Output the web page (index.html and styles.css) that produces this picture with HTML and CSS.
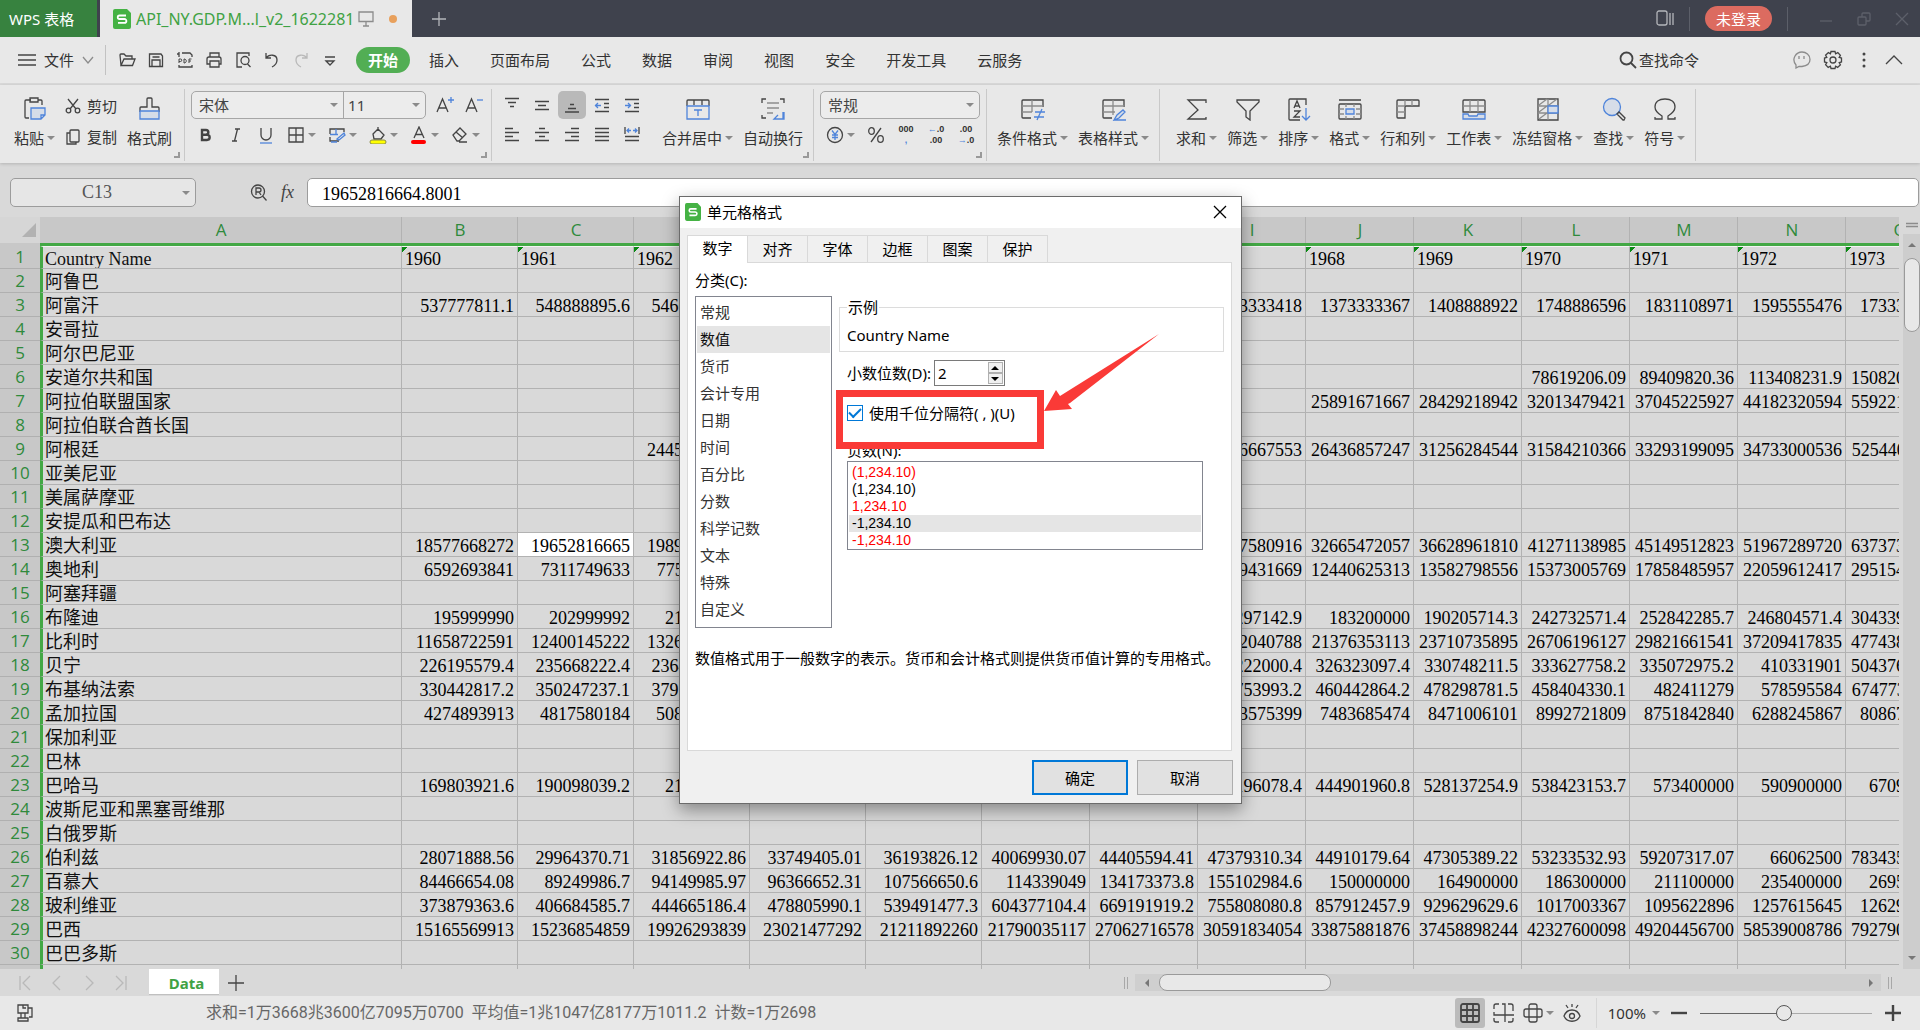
FILE: index.html
```html
<!DOCTYPE html>
<html lang="zh-CN">
<head>
<meta charset="utf-8">
<title>WPS 表格</title>
<link rel="stylesheet" href="styles.css">
</head>
<body>
<header class="titlebar">
  <button class="home">WPS 表格</button>
  <div class="doc">
    <svg class="slogo" width="18" height="20" viewBox="0 0 18 20"><path d="M2 0h12l4 4v14a2 2 0 0 1-2 2H2a2 2 0 0 1-2-2V2a2 2 0 0 1 2-2z"/><path class="s" d="M13 6.500H6.500a1.700 1.700 0 0 0 0 3.500h5a1.900 1.900 0 0 1 0 3.800H5"/></svg>
    <span class="doc-name">API_NY.GDP.M...l_v2_1622281</span>
    <svg class="i grey" width="16" height="16" viewBox="0 0 16 16"><path d="M1 1h14v9.500H1zM8 11v4M5 15h6"/></svg>
    <span class="dot"></span>
  </div>
  <button class="add" aria-label="新建"><svg class="i pale" width="16" height="16" viewBox="0 0 16 16"><path d="M8 1v14M1 8h14"/></svg></button>
  <div class="title-right">
    <svg class="i pale" width="18" height="17" viewBox="0 0 18 17"><rect x="1" y="1" width="10" height="14" rx="2"/><path d="M14 3v12M17 3v12"/></svg>
    <span class="tsep"></span>
    <button class="login">未登录</button>
    <span class="tsep"></span>
    <div class="winbtns">
      <svg class="i dim" width="14" height="14" viewBox="0 0 14 14"><path d="M1 9h12"/></svg>
      <svg class="i dim" width="14" height="14" viewBox="0 0 14 14"><rect x="1" y="5" width="8" height="8" rx="1"/><path d="M5 5V2a1 1 0 0 1 1-1h6a1 1 0 0 1 1 1v6a1 1 0 0 1-1 1H9"/></svg>
      <svg class="i dim" width="14" height="14" viewBox="0 0 14 14"><path d="M1 1l12 12M13 1L1 13"/></svg>
    </div>
  </div>
</header>

<nav class="menu">
  <button class="file"><svg class="i" width="18" height="14" viewBox="0 0 18 14"><path d="M0 2h18M0 7h18M0 12h18"/></svg>文件<svg class="i grey" width="12" height="8" viewBox="0 0 12 8"><path d="M1 1l5 6 5-6"/></svg></button>
  <div class="quick">
    <svg class="i" width="18" height="18" viewBox="0 0 18 18"><path d="M3 14.500L2 4a1 1 0 0 1 1-1h3l2 2h6v3M3 14.500L6 8h11l-2.500 6.500z"/></svg>
    <svg class="i" width="18" height="18" viewBox="0 0 18 18"><path d="M3 3h11l1.500 2v10.500h-13V3zM5 15V9h8v6M5.500 6h7"/></svg>
    <svg class="i" width="18" height="18" viewBox="0 0 18 18"><path d="M3 6V1M1 3h2M6 2h8l2 2v2M3 14v2h13v-2"/><path class="thin" d="M3 12V8h1.500a1 1 0 0 1 0 2.500H3M8 8v4c3 0 3-4 0-4M13 12V8h2.500M13 10h2"/></svg>
    <svg class="i" width="18" height="18" viewBox="0 0 18 18"><path d="M5 6V2h9v4M5 13H2V8a2 2 0 0 1 2-2h10a2 2 0 0 1 2 2v5h-2M5 10h9v6H5z"/></svg>
    <svg class="i" width="18" height="18" viewBox="0 0 18 18"><path d="M8 16H3V2h12v3M13.500 13l3 3"/><circle cx="11" cy="9.500" r="4"/></svg>
    <svg class="i" width="18" height="18" viewBox="0 0 18 18"><path d="M3 2v5h5M3 7c3-4 11-4 11 2 0 4-3 6-5 7"/></svg>
    <svg class="i fade" width="18" height="18" viewBox="0 0 18 18"><path d="M15 2v5h-5M15 7C12 3 4 3 4 9c0 4 3 6 5 7"/></svg>
    <svg class="i" width="18" height="18" viewBox="0 0 18 18"><path d="M4 6h10M5 10l4 4 4-4z"/></svg>
  </div>
  <div class="tabs">
    <button class="on">开始</button><button>插入</button><button>页面布局</button><button>公式</button><button>数据</button><button>审阅</button><button>视图</button><button>安全</button><button>开发工具</button><button>云服务</button>
  </div>
  <button class="search"><svg class="i bold" width="18" height="18" viewBox="0 0 18 18"><circle cx="7.500" cy="7.500" r="6"/><path d="M12 12l5 5"/></svg>查找命令</button>
  <div class="menu-right">
    <svg class="i grey" width="18" height="18" viewBox="0 0 18 18"><path d="M3 14C-2 8 3 1 9 1c4 0 8 3 8 7.500S13 15 9 15.500H6L3 17z"/><path d="M6 5v3M11 5v3"/></svg>
    <svg class="i" width="20" height="20" viewBox="0 0 20 20"><circle cx="10" cy="10" r="3"/><path d="M8 1.500h4l.6 2.300 2.200-1.200 2.600 2.800-1.200 2 2.300.6v4l-2.300.6 1.200 2.200-2.800 2.600-2-1.200-.6 2.300H8l-.6-2.300-2.200 1.200-2.600-2.800 1.200-2L1.500 12V8l2.300-.6-1.200-2.200 2.800-2.600 2 1.200z"/></svg>
    <svg class="solid" width="4" height="18" viewBox="0 0 4 18"><circle cx="2" cy="3" r="1.500"/><circle cx="2" cy="9" r="1.500"/><circle cx="2" cy="15" r="1.500"/></svg>
    <svg class="i" width="18" height="12" viewBox="0 0 18 12"><path d="M1 10l8-8 8 8"/></svg>
  </div>
</nav>

<section class="ribbon">
  <div class="group clip">
    <button class="big"><svg class="i" width="24" height="24" viewBox="0 0 24 24"><path d="M8 3H3a1 1 0 0 0-1 1v16a1 1 0 0 0 1 1h3M15 3h3a1 1 0 0 1 1 1v4M7 1h8v4H7z"/><path class="b fl" d="M8 11h14v7l-4 4H8zM22 18h-4v4"/></svg><span>粘贴<i class="arr"></i></span></button>
    <div class="col">
      <button class="small"><svg class="i" width="16" height="16" viewBox="0 0 16 16"><path d="M3 1l8 10M13 1L5 11"/><circle cx="3.500" cy="12.500" r="2.300"/><circle cx="12.500" cy="12.500" r="2.300"/></svg>剪切</button>
      <button class="small"><svg class="i" width="16" height="16" viewBox="0 0 16 16"><rect x="5" y="1" width="9" height="12" rx="1"/><path d="M5 4H2v11h9v-2"/></svg>复制</button>
    </div>
    <button class="big"><svg class="i" width="24" height="24" viewBox="0 0 24 24"><path d="M2 15v-4a1 1 0 0 1 1-1h6V2a1 1 0 0 1 1-1h3a1 1 0 0 1 1 1v8h6a1 1 0 0 1 1 1v4"/><path class="b fl" d="M2 14h19v8H2z"/></svg><span>格式刷</span></button>
    <i class="corner"></i>
  </div>
  <div class="group font">
    <div class="col">
      <div class="line">
        <div class="combos">
          <span class="sel name"><select aria-label="字体"><option>宋体</option></select></span>
          <span class="sel size"><select aria-label="字号"><option>11</option></select></span>
        </div>
        <svg class="i" width="19" height="18" viewBox="0 0 19 18"><path d="M1 16L6.500 3 12 16M3 12h7"/><path class="b" d="M15 1v6M12 4h6"/></svg>
        <svg class="i" width="19" height="18" viewBox="0 0 19 18"><path d="M1 16L6.500 3 12 16M3 12h7"/><path class="b" d="M12 4h6"/></svg>
      </div>
      <div class="line tools">
        <svg class="i heavy" width="18" height="18" viewBox="0 0 18 18"><path d="M5 4h4a2.300 2.300 0 0 1 0 4.700H5zM5 8.700h5a2.600 2.600 0 0 1 0 5.300H5z"/></svg>
        <svg class="i" width="18" height="18" viewBox="0 0 18 18"><path d="M8 3h5M5 15h5M10.500 3l-3 12"/></svg>
        <svg class="i" width="18" height="18" viewBox="0 0 18 18"><path d="M4 2v7a5 5 0 0 0 10 0V2"/><path class="b" d="M3 17h12"/></svg>
        <span class="drop"><svg class="i" width="18" height="18" viewBox="0 0 18 18"><path d="M2 2h14v14H2zM9 2v14M2 9h14"/></svg><i class="arr"></i></span>
        <span class="drop"><svg class="i" width="18" height="18" viewBox="0 0 18 18"><path d="M2 8V3h14v3M2 11v4h9"/><path class="b" d="M2 8.500h8M8 3v5M9 13l7-6 1 2-6 5zM3 16h6"/></svg><i class="arr"></i></span>
        <span class="drop"><svg class="i" width="18" height="18" viewBox="0 0 18 18"><path d="M9 1v4M4 8l5-5 6 6-3 4H5z"/><rect class="yel" x="1" y="14" width="16" height="4" rx="2"/></svg><i class="arr"></i></span>
        <span class="drop"><svg class="i" width="18" height="18" viewBox="0 0 18 18"><path d="M4 12L9 1l5 11M6 8.500h6"/><rect class="red" x="1" y="14" width="15" height="4" rx="2"/></svg><i class="arr"></i></span>
        <span class="drop"><svg class="i" width="18" height="18" viewBox="0 0 18 18"><path d="M2 9l7-7 6 6-7 7H6zM5 6l7 6M8 16h8"/></svg><i class="arr"></i></span>
      </div>
    </div>
    <i class="corner"></i>
  </div>
  <div class="group align">
    <div class="icons">
      <button aria-label="顶端对齐"><svg class="i" width="16" height="16" viewBox="0 0 16 16"><path d="M1 1.500h14M4 5.500h8M6 9.500h4"/></svg></button>
      <button aria-label="垂直居中"><svg class="i" width="16" height="16" viewBox="0 0 16 16"><path d="M1 4.500h14M4 8.500h8M1 12.500h14"/></svg></button>
      <button class="on" aria-label="底端对齐"><svg class="i" width="16" height="16" viewBox="0 0 16 16"><path d="M6 7.500h4M4 11.500h8M1 15h14"/></svg></button>
      <button aria-label="减少缩进"><svg class="i" width="16" height="16" viewBox="0 0 16 16"><path d="M1 2.500h14M10 6.500h5M10 10.500h5M1 14.500h14"/><path class="b" d="M7 8.500H1M4 6L1.500 8.500 4 11"/></svg></button>
      <button aria-label="增加缩进"><svg class="i" width="16" height="16" viewBox="0 0 16 16"><path d="M1 2.500h14M10 6.500h5M10 10.500h5M1 14.500h14"/><path class="b" d="M1 8.500h6M4 6l2.500 2.500L4 11"/></svg></button>
      <button aria-label="左对齐"><svg class="i" width="16" height="16" viewBox="0 0 16 16"><path d="M1 1.500h8M1 5.500h14M1 9.500h8M1 13.500h14"/></svg></button>
      <button aria-label="水平居中"><svg class="i" width="16" height="16" viewBox="0 0 16 16"><path d="M5 1.500h6M1 5.500h14M5 9.500h6M1 13.500h14"/></svg></button>
      <button aria-label="右对齐"><svg class="i" width="16" height="16" viewBox="0 0 16 16"><path d="M7 1.500h8M1 5.500h14M7 9.500h8M1 13.500h14"/></svg></button>
      <button aria-label="两端对齐"><svg class="i" width="16" height="16" viewBox="0 0 16 16"><path d="M1 1.500h14M1 5.500h14M1 9.500h14M1 13.500h14"/></svg></button>
      <button aria-label="分散对齐"><svg class="i" width="16" height="16" viewBox="0 0 16 16"><path d="M1 0v7M15 0v7M1 9.500h14M1 13.500h14"/><path class="b" d="M3 3.500h4M9 3.500h4M5 1.500l-2 2 2 2M11 1.500l2 2-2 2"/></svg></button>
    </div>
    <button class="big"><svg class="i" width="24" height="24" viewBox="0 0 24 24"><path d="M1 9V4a1 1 0 0 1 1-1h20a1 1 0 0 1 1 1v5M8 3v5M16 3v5"/><path class="b" d="M1 9h22v13H1zM8 13h8M12 13v6"/></svg><span>合并居中<i class="arr"></i></span></button>
    <button class="big"><svg class="i" width="24" height="24" viewBox="0 0 24 24"><path d="M1 6V2h4M19 2h4v4M1 18v3h4"/><path class="g" d="M6 6h12M6 11h12M6 16h6"/><path class="b" d="M23 15v7h-9M17 18l-4 4h9v-7"/></svg><span>自动换行</span></button>
    <i class="corner"></i>
  </div>
  <div class="group font">
    <div class="col">
      <div class="line"><div class="combos"><span class="sel fmt"><select aria-label="数字格式"><option>常规</option></select></span></div></div>
      <div class="line tools">
        <span class="drop"><svg class="i" width="18" height="18" viewBox="0 0 18 18"><circle cx="9" cy="9" r="7.500"/><path class="b" d="M6 4.500l3 4 3-4M9 8.500V14M6 9h6M6 11.500h6"/></svg><i class="arr"></i></span>
        <svg class="i" width="18" height="18" viewBox="0 0 18 18"><ellipse cx="4.500" cy="5" rx="2.800" ry="3.400"/><ellipse cx="13.500" cy="13" rx="2.800" ry="3.400"/><path d="M14 2L4 16"/></svg>
        <span class="digits"><b>000</b><b class="bl">,</b></span>
        <span class="digits"><b><em>←</em>.0</b><b>.00</b></span>
        <span class="digits"><b>.00</b><b><em>→</em>.0</b></span>
      </div>
    </div>
    <i class="corner"></i>
  </div>
  <div class="group">
    <button class="big"><svg class="i" width="24" height="24" viewBox="0 0 24 24"><path d="M10 21H2a1 1 0 0 1-1-1V4a1 1 0 0 1 1-1h20v7"/><path class="g" d="M1 9h21M1 15h10M11 3v12"/><path class="b" d="M14 15h10M13 20h10M21 12l-5 11"/></svg><span>条件格式<i class="arr"></i></span></button>
    <button class="big"><svg class="i" width="24" height="24" viewBox="0 0 24 24"><path d="M10 21H2a1 1 0 0 1-1-1V4a1 1 0 0 1 1-1h20v7"/><path class="g" d="M1 9h21M1 15h12M11 3v15"/><path class="b fl" d="M12 23l3-5 6-5 2 2-6 6zM12 23h12"/></svg><span>表格样式<i class="arr"></i></span></button>
  </div>
  <div class="group last">
    <button class="big"><svg class="i" width="24" height="24" viewBox="0 0 24 24"><path d="M21 6V3H3l10 10L3 22h18v-2"/></svg><span>求和<i class="arr"></i></span></button>
    <button class="big"><svg class="i" width="24" height="24" viewBox="0 0 24 24"><path d="M1 3h22v2l-9 9v9l-4-3v-6L1 5z"/></svg><span>筛选<i class="arr"></i></span></button>
    <button class="big"><svg class="i" width="24" height="24" viewBox="0 0 24 24"><path d="M13 23H3a1 1 0 0 1-1-1V3a1 1 0 0 1 1-1h16v6M7 11l3-7 3 7M8 9h4M7 14h6l-6 6h6"/><path class="b" d="M19 11v12M15 19l4 4 4-4"/></svg><span>排序<i class="arr"></i></span></button>
    <button class="big"><svg class="i" width="24" height="24" viewBox="0 0 24 24"><path d="M1 3h22M2 7h20a1 1 0 0 1 1 1v13a1 1 0 0 1-1 1H2a1 1 0 0 1-1-1V8a1 1 0 0 1 1-1z"/><path class="g" d="M1 12h5M18 12h5M1 17h5M18 17h5M8 7v3M16 7v3M8 19v3M16 19v3"/><path class="b fl" d="M8 12h8v5H8z"/></svg><span>格式<i class="arr"></i></span></button>
    <button class="big"><svg class="i" width="24" height="24" viewBox="0 0 24 24"><path d="M2 3h20a1 1 0 0 1 1 1v5H9v12H2a1 1 0 0 1-1-1V4a1 1 0 0 1 1-1z"/><path class="g" d="M9 9H1M1 15h8M9 3v6M16 3v6"/></svg><span>行和列<i class="arr"></i></span></button>
    <button class="big"><svg class="i" width="24" height="24" viewBox="0 0 24 24"><path d="M2 3h20a1 1 0 0 1 1 1v11H1V4a1 1 0 0 1 1-1z"/><path class="g" d="M1 9h22M8 3v12M16 3v12"/><path class="b fl" d="M1 17h5l1 2h8l1-2h7v5H1z"/></svg><span>工作表<i class="arr"></i></span></button>
    <button class="big"><svg class="i" width="24" height="24" viewBox="0 0 24 24"><path d="M2 2h20v21H2z"/><path class="g" d="M12 2v21M2 9h20M2 16h20M3 8l8-6M13 8l8-6M3 15l8-6M3 22l8-6"/><path class="b fl" d="M12 9h10v7H12z"/></svg><span>冻结窗格<i class="arr"></i></span></button>
    <button class="big"><svg class="i" width="24" height="24" viewBox="0 0 24 24"><circle class="b fl" cx="10" cy="10" r="8.500"/><path d="M15 17l2-2 6 6-1 2h-1z"/></svg><span>查找<i class="arr"></i></span></button>
    <button class="big"><svg class="i" width="24" height="24" viewBox="0 0 24 24"><path d="M2 20v2h7v-3C4 16 2 13 2 10c0-5 4-8 10-8s10 3 10 8c0 3-2 6-7 9v3h7v-2"/></svg><span>符号<i class="arr"></i></span></button>
  </div>
</section>

<section class="formula">
  <span class="sel cellname"><input value="C13" aria-label="名称框"></span>
  <div class="fx">
    <svg class="i" width="18" height="18" viewBox="0 0 18 18"><circle cx="8" cy="7.500" r="6.500"/><path d="M12.500 12l4 4.500M6 11V4h3a2 2 0 0 1 0 4H6M9 8l2 3"/></svg>
    <span class="fxs">fx</span>
  </div>
  <input class="expr" value="19652816664.8001" aria-label="编辑栏">
</section>

<main class="work">
  <div class="grid">
    <table>
      <colgroup><col class="ch"><col class="ca"><col class="cb" span="5"><col class="cg" span="9"></colgroup>
      <thead><tr><th><svg class="tri" width="14" height="14" viewBox="0 0 14 14"><path d="M14 0v14H0z"/></svg><th>A<th>B<th>C<th>D<th>E<th>F<th>G<th>H<th>I<th>J<th>K<th>L<th>M<th>N<th>O</tr></thead>
      <tbody>
      <tr class="first"><th>1<td>Country Name<td>1960<td>1961<td>1962<td><td><td><td><td><td>1968<td>1969<td>1970<td>1971<td>1972<td>1973
      <tr><th>2<td>阿鲁巴<td><td><td><td><td><td><td><td><td><td><td><td><td><td>
      <tr><th>3<td>阿富汗<td>537777811.1<td>548888895.6<td>546666677.8<td><td><td><td><td>1673333418<td>1373333367<td>1408888922<td>1748886596<td>1831108971<td>1595555476<td>1733333264
      <tr><th>4<td>安哥拉<td><td><td><td><td><td><td><td><td><td><td><td><td><td>
      <tr><th>5<td>阿尔巴尼亚<td><td><td><td><td><td><td><td><td><td><td><td><td><td>
      <tr><th>6<td>安道尔共和国<td><td><td><td><td><td><td><td><td><td><td>78619206.09<td>89409820.36<td>113408231.9<td>15082010300
      <tr><th>7<td>阿拉伯联盟国家<td><td><td><td><td><td><td><td><td>25891671667<td>28429218942<td>32013479421<td>37045225927<td>44182320594<td>55922133333
      <tr><th>8<td>阿拉伯联合酋长国<td><td><td><td><td><td><td><td><td><td><td><td><td><td>
      <tr><th>9<td>阿根廷<td><td><td>24450604878<td><td><td><td><td>24256667553<td>26436857247<td>31256284544<td>31584210366<td>33293199095<td>34733000536<td>52544000117
      <tr><th>10<td>亚美尼亚<td><td><td><td><td><td><td><td><td><td><td><td><td><td>
      <tr><th>11<td>美属萨摩亚<td><td><td><td><td><td><td><td><td><td><td><td><td><td>
      <tr><th>12<td>安提瓜和巴布达<td><td><td><td><td><td><td><td><td><td><td><td><td><td>
      <tr><th>13<td>澳大利亚<td>18577668272<td class="cur">19652816665<td>19892485161<td><td><td><td><td>30397580916<td>32665472057<td>36628961810<td>41271138985<td>45149512823<td>51967289720<td>63737365987
      <tr><th>14<td>奥地利<td>6592693841<td>7311749633<td>7756110210<td><td><td><td><td>11579431669<td>12440625313<td>13582798556<td>15373005769<td>17858485957<td>22059612417<td>29515467923
      <tr><th>15<td>阿塞拜疆<td><td><td><td><td><td><td><td><td><td><td><td><td><td>
      <tr><th>16<td>布隆迪<td>195999990<td>202999992<td>213500006<td><td><td><td><td>178297142.9<td>183200000<td>190205714.3<td>242732571.4<td>252842285.7<td>246804571.4<td>30433957143
      <tr><th>17<td>比利时<td>11658722591<td>12400145222<td>13264015675<td><td><td><td><td>19992040788<td>21376353113<td>23710735895<td>26706196127<td>29821661541<td>37209417835<td>47743801282
      <tr><th>18<td>贝宁<td>226195579.4<td>235668222.4<td>236434904.1<td><td><td><td><td>306222000.4<td>326323097.4<td>330748211.5<td>333627758.2<td>335072975.2<td>410331901<td>50437601830
      <tr><th>19<td>布基纳法索<td>330442817.2<td>350247237.1<td>379567178.5<td><td><td><td><td>450753993.2<td>460442864.2<td>478298781.5<td>458404330.1<td>482411279<td>578595584<td>67477330811
      <tr><th>20<td>孟加拉国<td>4274893913<td>4817580184<td>5081413340<td><td><td><td><td>7253575399<td>7483685474<td>8471006101<td>8992721809<td>8751842840<td>6288245867<td>8086725729
      <tr><th>21<td>保加利亚<td><td><td><td><td><td><td><td><td><td><td><td><td><td>
      <tr><th>22<td>巴林<td><td><td><td><td><td><td><td><td><td><td><td><td><td>
      <tr><th>23<td>巴哈马<td>169803921.6<td>190098039.2<td>212254902<td><td><td><td><td>390196078.4<td>444901960.8<td>528137254.9<td>538423153.7<td>573400000<td>590900000<td>670900000
      <tr><th>24<td>波斯尼亚和黑塞哥维那<td><td><td><td><td><td><td><td><td><td><td><td><td><td>
      <tr><th>25<td>白俄罗斯<td><td><td><td><td><td><td><td><td><td><td><td><td><td>
      <tr><th>26<td>伯利兹<td>28071888.56<td>29964370.71<td>31856922.86<td>33749405.01<td>36193826.12<td>40069930.07<td>44405594.41<td>47379310.34<td>44910179.64<td>47305389.22<td>53233532.93<td>59207317.07<td>66062500<td>78343558280
      <tr><th>27<td>百慕大<td>84466654.08<td>89249986.7<td>94149985.97<td>96366652.31<td>107566650.6<td>114339049<td>134173373.8<td>155102984.6<td>150000000<td>164900000<td>186300000<td>211100000<td>235400000<td>269500000
      <tr><th>28<td>玻利维亚<td>373879363.6<td>406684585.7<td>444665186.4<td>478805990.1<td>539491477.3<td>604377104.4<td>669191919.2<td>755808080.8<td>857912457.9<td>929629629.6<td>1017003367<td>1095622896<td>1257615645<td>1262992441
      <tr><th>29<td>巴西<td>15165569913<td>15236854859<td>19926293839<td>23021477292<td>21211892260<td>21790035117<td>27062716578<td>30591834054<td>33875881876<td>37458898244<td>42327600098<td>49204456700<td>58539008786<td>79279057731
      <tr><th>30<td>巴巴多斯<td><td><td><td><td><td><td><td><td><td><td><td><td><td>
      <tr><th><td><td><td><td><td><td><td><td><td><td><td><td><td><td><td>
      </tbody>
    </table>
  </div>
  <div class="vscroll">
    <svg class="i grey split" width="12" height="17" viewBox="0 0 12 17"><path d="M0 6.500h12M0 9.500h12"/></svg>
    <div class="vtrack"><i class="up"></i><span class="vthumb"></span><i class="down"></i></div>
  </div>
</main>

<section class="sheets">
  <div class="nav">
    <svg class="i fade" width="14" height="16" viewBox="0 0 14 16"><path d="M2 1v14M12 1L5 8l7 7"/></svg>
    <svg class="i fade" width="14" height="16" viewBox="0 0 14 16"><path d="M10 1L3 8l7 7"/></svg>
    <svg class="i fade" width="14" height="16" viewBox="0 0 14 16"><path d="M4 1l7 7-7 7"/></svg>
    <svg class="i fade" width="14" height="16" viewBox="0 0 14 16"><path d="M2 1l7 7-7 7M12 1v14"/></svg>
  </div>
  <button class="sheet">Data</button>
  <button class="plus" aria-label="新建工作表"><svg class="i" width="18" height="18" viewBox="0 0 18 18"><path d="M9 1v16M1 9h16"/></svg></button>
  <div class="hwrap">
    <i class="grip"></i>
    <div class="htrack"><i class="lt"></i><span class="hthumb"></span><i class="rt"></i></div>
    <i class="grip"></i>
  </div>
</section>

<footer class="status">
  <svg class="i" width="18" height="18" viewBox="0 0 18 18"><path d="M2 1h10v8H2zM7 1v3h3M12 4h4v9h-3M5 9v5M9 9v5M2 14h10v3H2z"/></svg>
  <span class="stats">求和=1万3668兆3600亿7095万0700&nbsp; 平均值=1兆1047亿8177万1011.2&nbsp; 计数=1万2698</span>
  <div class="views">
    <button class="view on" aria-label="普通视图"><svg class="i bold" width="20" height="20" viewBox="0 0 20 20"><rect x="1" y="1" width="18" height="18" rx="2"/><path d="M7 1v18M13 1v18M1 7h18M1 13h18"/></svg></button>
    <button class="view" aria-label="分页预览"><svg class="i" width="22" height="20" viewBox="0 0 22 20"><path d="M6 1H3a2 2 0 0 0-2 2v3M9 1h3v18M15 1h3a2 2 0 0 1 2 2v5M1 9v3h20M1 15v2a2 2 0 0 0 2 2h3M20 15v2a2 2 0 0 1-2 2h-3"/></svg></button>
    <button class="view" aria-label="页面布局"><svg class="i" width="20" height="20" viewBox="0 0 20 20"><rect x="6" y="1" width="8" height="18" rx="2"/><path d="M6 6H3a2 2 0 0 0-2 2v4a2 2 0 0 0 2 2h3M14 6h3a2 2 0 0 1 2 2v4a2 2 0 0 1-2 2h-3M6 6h8M6 14h8"/></svg><i class="arr"></i></button>
    <button class="view" aria-label="护眼模式"><svg class="i" width="20" height="20" viewBox="0 0 20 20"><path d="M2 13c3-8 13-8 16 0-3 7-13 7-16 0zM10 1v3M4 2l2 3M16 2l-2 3"/><circle cx="10" cy="13" r="2.500"/></svg></button>
  </div>
  <button class="zoom">100%<i class="arr"></i></button>
  <div class="slide">
    <svg class="i heavy" width="18" height="18" viewBox="0 0 18 18"><path d="M1 9h16"/></svg>
    <input type="range" aria-label="缩放" min="0" max="100" value="49">
    <svg class="i heavy" width="18" height="18" viewBox="0 0 18 18"><path d="M1 9h16M9 1v16"/></svg>
  </div>
</footer>

<div class="dialog" role="dialog" aria-label="单元格格式">
  <div class="dtitle">
    <svg class="slogo" width="16" height="18" viewBox="0 0 18 20"><path d="M2 0h12l4 4v14a2 2 0 0 1-2 2H2a2 2 0 0 1-2-2V2a2 2 0 0 1 2-2z"/><path class="s" d="M13 6.500H6.500a1.700 1.700 0 0 0 0 3.500h5a1.900 1.900 0 0 1 0 3.800H5"/></svg>
    <span>单元格格式</span>
    <button aria-label="关闭"><svg class="i black" width="14" height="14" viewBox="0 0 14 14"><path d="M1 1l12 12M13 1L1 13"/></svg></button>
  </div>
  <div class="dtabs"><button class="on">数字</button><button>对齐</button><button>字体</button><button>边框</button><button>图案</button><button>保护</button></div>
  <div class="panel">
    <label class="cat" for="cats">分类(C):</label>
    <div class="cols">
      <select id="cats" class="cats" size="12"><option>常规<option selected>数值<option>货币<option>会计专用<option>日期<option>时间<option>百分比<option>分数<option>科学记数<option>文本<option>特殊<option>自定义</select>
      <div class="opts">
        <fieldset><legend>示例</legend>Country Name</fieldset>
        <div class="places"><label for="dec">小数位数(D):</label><span class="num"><input id="dec" value="2"><span class="spin"><button aria-label="增加"><i class="up"></i></button><button aria-label="减少"><i class="down"></i></button></span></span></div>
        <label class="sep"><input type="checkbox" checked>使用千位分隔符( , )(U)</label>
        <label class="neg" for="negs">负数(N):</label>
        <select id="negs" class="negs" size="5"><option class="r">(1,234.10)<option>(1,234.10)<option class="r">1,234.10<option selected>-1,234.10<option class="r">-1,234.10</select>
      </div>
    </div>
    <p>数值格式用于一般数字的表示。货币和会计格式则提供货币值计算的专用格式。</p>
  </div>
  <div class="dbtns"><button class="ok">确定</button><button>取消</button></div>
  <svg class="mark" width="330" height="130" viewBox="0 0 330 130"><path class="frame" d="M4.500 63.500h201v52h-201z"/><path class="arrow" d="M209 81l12-21 4 6L324 4 235 73l-2 1 4 5z"/></svg>
</div>
</body>
</html>
```
FILE: styles.css
```css
* { box-sizing: border-box; }
html, body { height: 100%; margin: 0; }
body {
  display: flex; flex-direction: column; position: relative; overflow: hidden;
  font: 15px/22px "Noto Sans", "Noto Sans CJK SC", sans-serif;
  color: #333; background: #d9d9d9;
}
button, input, select { font: inherit; color: inherit; margin: 0; padding: 0; border: 0; background: none; outline: 0; border-radius: 0; }
svg { flex: none; display: block; }

.i { fill: none; stroke: #444; stroke-width: 1.3; }
.i.grey, .i .g { stroke: #8c8c8c; }
.i.pale { stroke: #b4b6bb; }
.i.dim { stroke: #5d606a; }
.i.fade { stroke: #b9b9b9; }
.i.bold { stroke-width: 1.8; }
.i.heavy { stroke-width: 2.4; }
.i.black { stroke: #000; }
.i .b { stroke: #4f84da; }
.i .fl { fill: #d6dde8; }
.i .thin { stroke-width: 1; }
.i .yel { fill: #ff0; stroke: #8c8c4a; stroke-width: 1; }
.i .red { fill: #f00; stroke: none; }
.solid { fill: #444; }
.slogo { fill: #45b244; }
.slogo .s { fill: none; stroke: #fff; stroke-width: 1.8; }
.arr { flex: none; width: 0; height: 0; border: 4px solid transparent; border-top: 4px solid #8a8a8a; border-bottom: 0; margin-left: 3px; }

/* title bar */
.titlebar { display: flex; height: 37px; flex: none; background: #3f424d; }
.home { width: 97px; text-align: left; padding-left: 9px; background: #37823f; color: #fff; margin-right: 3px; }
.doc { width: 312px; display: flex; align-items: center; padding-left: 13px; background: #e8e8e8; color: #3fa244; }
.doc-name { width: 217px; margin: 0 5px; white-space: nowrap; font-size: 16px; }
.dot { width: 8px; height: 8px; border-radius: 4px; background: #e8a05c; margin-left: 15px; }
.add { padding: 0 19px; }
.title-right { margin-left: auto; display: flex; align-items: center; }
.tsep { width: 1px; height: 24px; background: #5c5f69; margin: 0 15px; }
.login { width: 67px; height: 25px; border-radius: 13px; background: #dc6b60; color: #fff; }
.winbtns { display: flex; gap: 24px; padding: 0 11px 0 16px; }

/* menu */
.menu { display: flex; align-items: center; height: 48px; flex: none; background: #e8e8e8; border-bottom: 2px solid #d9d9d9; }
.file { display: flex; align-items: center; gap: 8px; padding: 0 11px 0 18px; height: 30px; border-right: 1px solid #c2c2c2; }
.quick { display: flex; gap: 11px; padding: 0 17px 0 12px; }
.tabs { display: flex; gap: 7px; }
.tabs button { padding: 0 12px; height: 26px; border-radius: 13px; }
.tabs .on { background: #52ae54; color: #fff; font-weight: 700; }
.search { margin-left: auto; display: flex; align-items: center; gap: 2px; }
.menu-right { display: flex; align-items: center; gap: 12px; padding: 0 17px 0 94px; }
.menu-right .solid { margin: 0 7px; }

/* ribbon */
.ribbon { display: flex; height: 78px; flex: none; background: #e8e8e8; box-shadow: 0 1px 3px #b4b4b4; position: relative; padding-top: 4px; }
.group { position: relative; display: flex; gap: 10px; height: 72px; padding: 2px 10px 0; border-right: 1px solid #c9c9c9; }
.group.clip { padding: 2px 12px 0 14px; }
.group.font { padding: 2px 6px 0; }
.group.align { padding-left: 6px; }
.group.last { padding-left: 16px; }
.corner { position: absolute; right: 4px; bottom: 3px; width: 6px; height: 6px; border: solid #999; border-width: 0 2px 2px 0; }
.big { display: flex; flex-direction: column; align-items: center; padding-top: 6px; height: 60px; gap: 6px; }
.big span { display: flex; align-items: center; white-space: nowrap; }
.col { display: flex; flex-direction: column; gap: 2px; }
.small { display: flex; align-items: center; gap: 6px; height: 29px; }
.line { display: flex; align-items: center; height: 28px; gap: 10px; }
.group.font .col { width: 294px; }
.group.font ~ .group.font .col { width: 160px; }
.line.tools { padding-left: 6px; gap: 12px; }
.drop { display: flex; align-items: center; }
.combos { display: flex; height: 28px; border: 1px solid #a6a6a6; border-radius: 5px; background: #ececec; }
.sel { position: relative; display: block; }
.sel select { width: 100%; height: 100%; appearance: none; padding-left: 7px; color: #444; }
.sel::after { content: ""; position: absolute; right: 5px; top: 50%; margin-top: -2px; border: 4px solid transparent; border-top-color: #8a8a8a; border-bottom: 0; }
.name { width: 151px; }
.size { width: 82px; border-left: 1px solid #a6a6a6; }
.size select { padding-left: 4px; }
.fmt { width: 158px; }
.digits { width: 18px; display: flex; flex-direction: column; align-items: center; font: 700 9px/11px "Liberation Sans", sans-serif; }
.digits b { white-space: nowrap; }
.digits em, .digits .bl { font-style: normal; color: #4f84da; }
.icons { display: grid; grid-template-columns: repeat(5, 28px); grid-auto-rows: 28px; gap: 2px; margin-right: 6px; align-content: start; }
.icons button { display: grid; place-items: center; border-radius: 5px; }
.icons .on { background: #b9b9b9; }

/* formula bar */
.formula { display: flex; height: 54px; flex: none; padding: 15px 1px 0 10px; }
.cellname { width: 186px; height: 29px; border: 1px solid #9c9c9c; border-radius: 5px; background: #e6e6e6; }
.cellname input { width: 100%; height: 100%; text-align: center; padding-right: 12px; font: 18px "Liberation Serif", serif; color: #555; }
.fx { display: flex; align-items: center; gap: 13px; width: 111px; height: 29px; padding-left: 54px; }
.fxs { font: italic 18px "Liberation Serif", serif; color: #444; }
.expr { flex: 1; height: 29px; border: 1px solid #9c9c9c; border-radius: 5px; background: #fff; padding: 3px 0 0 14px; font: 18px "Liberation Serif", serif; color: #000; }

/* worksheet */
.work { flex: 1; min-height: 0; display: flex; }
.grid { flex: 1; min-width: 0; overflow: hidden; }
table { table-layout: fixed; width: 1954px; border-collapse: separate; border-spacing: 0; }
.ch { width: 40px; }
.ca { width: 362px; }
.cb { width: 116px; }
.cg { width: 108px; }
th { padding: 0; font: 17px/23px "Open Sans", sans-serif; color: #2f8a3b; background: #c8c8c8; }
thead th { height: 29px; line-height: 26px; border-bottom: 3px solid #43a845; background: linear-gradient(90deg, transparent calc(100% - 1px), #b2b2b2 0) #c8c8c8; }
thead th:first-child { background: #d6d6d6; border-bottom-color: #c8c8c8; }
.tri { fill: #b2b2b2; margin: 0 0 0 22px; }
tbody th { border-bottom: 1px solid #b0b0b0; }
td { height: 24px; padding: 3px 3px 0; border: solid #b2b2b2; border-width: 0 1px 1px 0; font: 18px/20px "Liberation Serif", "Noto Sans CJK SC", serif; color: #000; text-align: right; white-space: nowrap; overflow: hidden; }
td:nth-child(2) { border-left: 3px solid #43a845; padding-left: 2px; text-align: left; color: #111; }
.first td { height: 23px; line-height: 18px; text-align: left; border-top: 1px solid #f4f4f4; background: linear-gradient(135deg, #0a8a14 4px, transparent 4px); }
.first th { line-height: 22px; }
.first td:nth-child(2) { background: none; }
.cur { background: #fff; }
.vscroll { width: 17px; margin-left: 4px; display: flex; flex-direction: column; align-items: center; }
.vtrack { width: 17px; flex: 1; display: flex; flex-direction: column; align-items: center; background: #cdcdcd; padding: 9px 0; }
.vthumb { width: 16px; height: 74px; margin: 11px 0 auto; border: 1px solid #9a9a9a; border-radius: 8px; background: #e8e8e8; }
.up, .down, .lt, .rt { flex: none; width: 0; height: 0; border: 4px solid transparent; }
.up { border-bottom-color: #777; border-top: 0; }
.down { border-top-color: #777; border-bottom: 0; }
.lt { border-right-color: #777; border-left: 0; }
.rt { border-left-color: #777; border-right: 0; }

/* sheet tabs */
.sheets { display: flex; height: 27px; flex: none; background: #d9d9d9; }
.nav { display: flex; align-items: center; gap: 18px; width: 149px; padding-left: 18px; }
.sheet { width: 70px; height: 26px; background: #fff; border-bottom: 1px solid #c0c0c0; color: #3fa244; font-weight: 700; padding: 3px 0 0 5px; }
.plus { padding: 0 8px; }
.hwrap { margin-left: auto; width: 796px; display: flex; align-items: center; gap: 7px; padding-right: 28px; }
.grip { width: 4px; height: 12px; border: solid #a8a8a8; border-width: 0 1px; }
.htrack { flex: 1; height: 17px; display: flex; align-items: center; background: #cfcfcf; padding: 0 8px 0 10px; }
.hthumb { width: 172px; height: 17px; margin: 0 auto 0 10px; border: 1px solid #9a9a9a; border-radius: 8px; background: #e8e8e8; }

/* status bar */
.status { display: flex; align-items: center; height: 34px; flex: none; background: #e8e8e8; padding: 0 18px 0 16px; }
.stats { margin-left: 172px; color: #666; white-space: nowrap; font: 16px/22px Roboto, "Noto Sans CJK SC", sans-serif; }
.views { margin-left: auto; display: flex; align-items: center; gap: 8px; padding-right: 14px; border-right: 1px solid #d6d6d6; }
.view { display: flex; align-items: center; height: 30px; }
.view.on { background: #bbb; padding: 0 5px; border-radius: 3px; }
.zoom { display: flex; align-items: center; padding-left: 11px; }
.zoom .arr { margin-left: 6px; }
.slide { display: flex; align-items: center; gap: 12px; padding-left: 10px; }
.slide input { appearance: none; width: 172px; height: 18px; }
.slide input::-webkit-slider-runnable-track { height: 1px; background: linear-gradient(90deg, #666 50%, #aaa 50%); }
.slide input::-webkit-slider-thumb { appearance: none; width: 16px; height: 16px; margin-top: -8px; border: 1px solid #555; border-radius: 8px; background: #e8e8e8; }

/* cell format dialog */
.dialog { position: absolute; top: 196px; left: calc(50% - 281px); width: 563px; border: 1px solid #6b6b6b; background: #f0f0f0; box-shadow: 0 6px 16px rgba(0, 0, 0, .38); color: #000; padding-bottom: 8px; }
.dtitle { display: flex; align-items: center; height: 31px; background: #fff; padding: 0 14px 2px 5px; gap: 6px; }
.dtitle button { margin-left: auto; }
.dtabs { display: flex; align-items: flex-end; height: 34px; padding-left: 7px; }
.dtabs button { width: 60px; height: 27px; border: 1px solid #d9d9d9; border-left: 0; border-bottom: 0; }
.dtabs .on { width: 61px; height: 28px; border-left: 1px solid #d9d9d9; background: #fff; position: relative; margin-bottom: -1px; padding-bottom: 3px; }
.panel { margin: 0 9px 0 7px; padding: 6px 7px 0; height: 489px; border: 1px solid #d9d9d9; background: #fff; }
.cat { display: block; height: 27px; }
.cols { display: flex; }
.cats, .negs { display: block; border: 1px solid #82858f; background: #fff; overflow: hidden; padding: 1px; }
.cats { width: 137px; height: 332px; padding-top: 2px; color: #333; }
.cats option { height: 27px; min-height: 27px; padding: 2px 3px; line-height: 23px; }
option:checked { background: linear-gradient(#e5e5e5, #e5e5e5); }
.opts { width: 385px; margin-left: 7px; }
fieldset { margin: 0; padding: 6px 7px 0; height: 56px; border: 1px solid #dcdcdc; min-width: 0; }
legend { padding: 0 1px; line-height: 22px; height: 22px; }
.places { display: flex; align-items: center; gap: 3px; height: 26px; margin: 8px 0 0 8px; }
.num { display: flex; width: 71px; height: 26px; border: 1px solid #7a7a7a; padding: 1px; background: #fff; }
.num input { flex: 1; min-width: 0; padding-left: 2px; }
.spin { width: 15px; display: flex; flex-direction: column; }
.spin button { flex: 1; display: grid; place-items: center; border: 1px solid #b0b0b0; background: #f0f0f0; }
.spin .up { border-bottom-color: #000; }
.spin .down { border-top-color: #000; }
.sep { display: flex; align-items: center; gap: 6px; height: 22px; margin: 16px 0 0 8px; white-space: nowrap; }
.sep input { appearance: none; width: 16px; height: 16px; border: 1px solid #0078d7; display: grid; place-items: center; }
.sep input::after { content: ""; width: 10px; height: 5px; border: solid #0078d7; border-width: 0 0 2px 2px; transform: rotate(-45deg); margin-bottom: 3px; }
.neg { display: block; margin: 15px 0 0 8px; }
.negs { width: 356px; height: 89px; margin-left: 8px; font-family: "Liberation Sans", sans-serif; font-size: 14px; padding-top: 2px; }
.negs option { height: 17px; min-height: 17px; padding: 0 3px; line-height: 17px; color: #000; }
.negs .r { color: #f00; }
.panel p { margin: 19px 0 0; white-space: nowrap; }
.dbtns { display: flex; justify-content: flex-end; gap: 9px; padding: 9px 8px 0; }
.dbtns button { width: 96px; height: 35px; border: 1px solid #adadad; background: #e1e1e1; }
.dbtns .ok { border: 2px solid #0078d7; }
.mark { position: absolute; left: 155px; top: 133px; pointer-events: none; }
.frame { fill: none; stroke: #fa3a37; stroke-width: 7; }
.arrow { fill: #fa3a37; }
```
